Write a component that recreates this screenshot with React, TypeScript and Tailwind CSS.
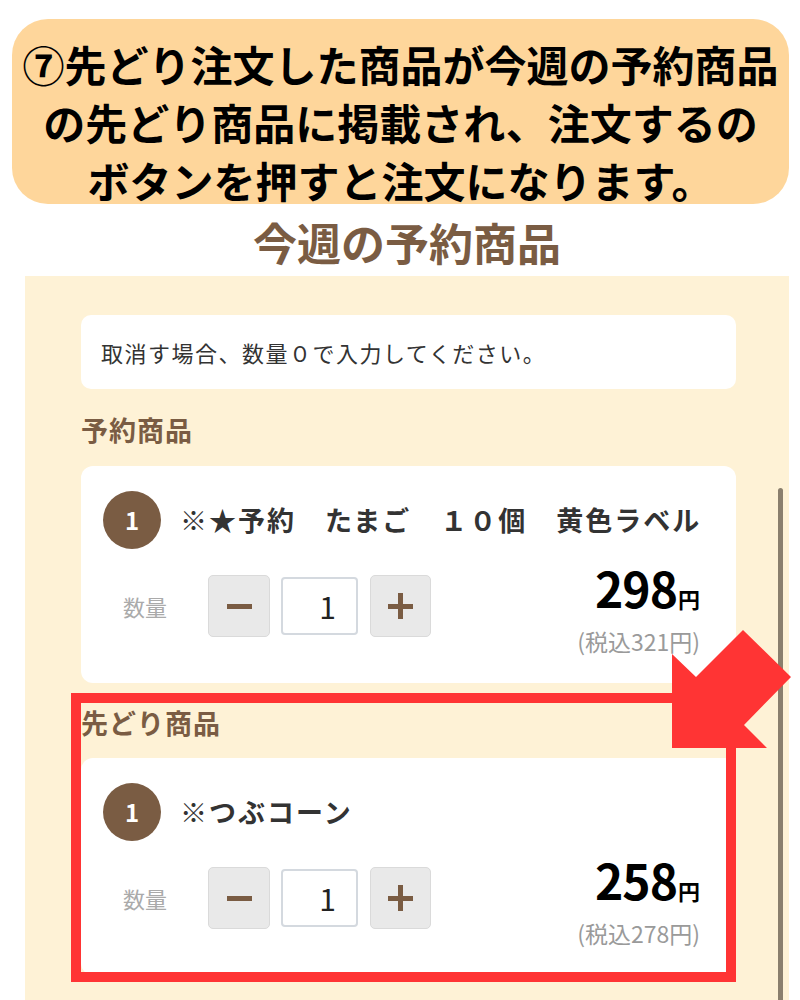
import React from "react";

function Minus() {
  return (
    <div className="w-[62px] h-[62px] rounded-[5px] bg-[#e9e9e9] border border-[#dadada] flex items-center justify-center">
      <div className="w-[25px] h-[5px] bg-[#7a5c43]" />
    </div>
  );
}

function Plus() {
  return (
    <div className="relative w-[61px] h-[62px] rounded-[5px] bg-[#e9e9e9] border border-[#dadada] flex items-center justify-center">
      <div className="absolute w-[25px] h-[5px] bg-[#7a5c43]" />
      <div className="absolute w-[5px] h-[26px] bg-[#7a5c43]" />
    </div>
  );
}

function Card({ name, price, tax }: { name: string; price: string; tax: string }) {
  return (
    <div className="h-[217px] rounded-[12px] bg-white pl-[22px] pr-[30px] pt-[25px]">
      <div className="flex items-center h-[58px]">
        <div className="shrink-0 w-[58px] h-[58px] rounded-full bg-[#7a5c43] flex items-center justify-center text-white text-[24px] font-bold">
          1
        </div>
        <div className="ml-[19px] text-[27px] font-bold tracking-[2px] text-[#333] whitespace-nowrap">{name}</div>
      </div>
      <div className="mt-[26px] pr-[6px] flex justify-between items-start">
        <div className="flex items-center pl-[20px]">
          <span className="w-[85px] text-[22px] text-[#aaaaaa]">数量</span>
          <Minus />
          <div className="ml-[11px] w-[77px] h-[58px] rounded-[4px] border-2 border-[#d4d9df] bg-white flex items-center justify-end pr-[20px] text-[30px] text-[#222]">
            1
          </div>
          <div className="ml-[12px]">
            <Plus />
          </div>
        </div>
        <div className="-mt-[12px] flex flex-col items-end">
          <div className="leading-none whitespace-nowrap font-bold text-black">
            <span className="text-[48px] tracking-[-1px]">{price}</span>
            <span className="text-[22px] ml-[1px]">円</span>
          </div>
          <div className="mt-[19px] leading-none text-[23px] text-[#9a9a9a] whitespace-nowrap">{tax}</div>
        </div>
      </div>
    </div>
  );
}

export default function App() {
  return (
    <div className="relative w-[800px] h-[1000px] overflow-hidden bg-white font-['Noto_Sans_CJK_JP','Noto_Sans',sans-serif]">
      <div className="pt-[19px] pl-[12px]">
        <div className="w-[777px] h-[185px] rounded-[36px] bg-[#fed69b] pt-[16px] text-center text-[42px] leading-[58px] font-bold text-black whitespace-nowrap">
          ⑦先どり注文した商品が今週の予約商品
          <br />
          の先どり商品に掲載され、注文するの
          <br />
          ボタンを押すと注文になります。
        </div>
      </div>
      <div className="h-[72px] pt-[3px] flex items-center justify-center pl-[14px] text-[44px] font-bold text-[#7a5c43]">
        今週の予約商品
      </div>
      <div className="relative ml-[25px] w-[764px] bg-[#fef2d6] pl-[56px] pr-[53px] pt-[39px] pb-[60px]">
        <div className="h-[74px] rounded-[10px] bg-white flex items-center pl-[20px] text-[22px] tracking-[1.5px] text-[#333]">
          取消す場合、数量０で入力してください。
        </div>
        <div className="mt-[23px] h-[36px] flex items-center text-[27px] tracking-[1px] font-bold text-[#7a5c43]">予約商品</div>
        <div className="mt-[18px]">
          <Card name="※★予約　たまご　１０個　黄色ラベル" price="298" tax="(税込321円)" />
        </div>
        <div className="mt-[22px] h-[36px] flex items-center text-[27px] tracking-[1px] font-bold text-[#7a5c43]">先どり商品</div>
        <div className="mt-[17px]">
          <Card name="※つぶコーン" price="258" tax="(税込278円)" />
        </div>
        <div className="absolute left-[753px] top-[212px] w-[5px] h-[600px] rounded-full bg-[#8a7f6d]" />
        <div className="absolute left-[46px] top-[417px] w-[665px] h-[289px] border-[10px] border-[#ff3434]" />
      </div>
      <svg className="absolute left-0 top-0" width="800" height="1000" viewBox="0 0 800 1000">
        <polygon points="672,654 696,677 743,630 791,677 744,725 767,748 672,748" fill="#ff3434" />
      </svg>
    </div>
  );
}
